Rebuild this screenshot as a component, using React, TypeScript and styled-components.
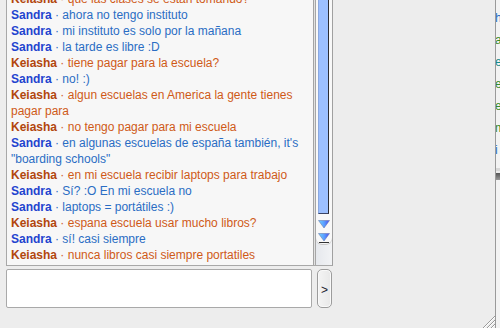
import styled, { createGlobalStyle } from "styled-components"

const GlobalStyle = createGlobalStyle`
  html, body {
    margin: 0;
    padding: 0;
    background: #ededed;
    overflow: hidden;
  }
  body {
    font-family: "Liberation Sans", Arial, Helvetica, sans-serif;
  }
`;

type Speaker = "Sandra" | "Keiasha";

const messages: { who: Speaker; text: string }[] = [
  { who: "Keiasha", text: "que las clases se están tomando?" },
  { who: "Sandra", text: "ahora no tengo instituto" },
  { who: "Sandra", text: "mi instituto es solo por la mañana" },
  { who: "Sandra", text: "la tarde es libre :D" },
  { who: "Keiasha", text: "tiene pagar para la escuela?" },
  { who: "Sandra", text: "no! :)" },
  { who: "Keiasha", text: "algun escuelas en America la gente tienes pagar para" },
  { who: "Keiasha", text: "no tengo pagar para mi escuela" },
  { who: "Sandra", text: "en algunas escuelas de españa también, it's \"boarding schools\"" },
  { who: "Keiasha", text: "en mi escuela recibir laptops para trabajo" },
  { who: "Sandra", text: "Sí? :O En mi escuela no" },
  { who: "Sandra", text: "laptops = portátiles :)" },
  { who: "Keiasha", text: "espana escuela usar mucho libros?" },
  { who: "Sandra", text: "sí! casi siempre" },
  { who: "Keiasha", text: "nunca libros casi siempre portatiles" },
];

const colors = {
  Sandra: { name: "#1f44cf", text: "#2a6dc4" },
  Keiasha: { name: "#b2460d", text: "#cf5a17" },
};

const Screen = styled.div`
  display: flex;
  width: 500px;
  height: 328px;
  overflow: hidden;
`;

const Window = styled.div`
  position: relative;
  box-sizing: border-box;
  width: 496px;
  height: 328px;
  border-right: 1px solid #9a9a9a;
  padding-left: 6px;
  display: flex;
  flex-direction: column;
`;

const ChatPanel = styled.div`
  box-sizing: border-box;
  width: 327px;
  height: 266px;
  display: flex;
  border-left: 1px solid #a8a8a8;
  border-right: 1px solid #a0a0a0;
  border-bottom: 1px solid #a8a8a8;
`;

const Transcript = styled.div`
  box-sizing: border-box;
  width: 307px;
  background: #f7f7f7;
  border-right: 1px solid #a4a4a4;
  padding: 0 4px;
  overflow: hidden;
`;

const Lines = styled.div`
  margin-top: -9px;
  font-size: 12px;
  line-height: 16px;
`;

const Line = styled.div<{ $who: Speaker }>`
  color: ${(p) => colors[p.$who].text};
`;

const Name = styled.b<{ $who: Speaker }>`
  color: ${(p) => colors[p.$who].name};
`;

const Scrollbar = styled.div`
  width: 18px;
  display: flex;
  flex-direction: column;
  background: linear-gradient(to right, #e4e7ec, #f2f3f5);
  box-shadow: inset 1px 0 0 #e2e2e2, inset 2px 0 0 #a6a6a6;
`;

const Track = styled.div`
  box-sizing: border-box;
  height: 245px;
  margin-left: 2px;
  padding-left: 2px;
  background: #f8f8f8;
  border-radius: 0 0 6px 6px;
  box-shadow: inset 0 -1px 0 #c8c8c8;
  display: flex;
  flex-direction: column;
`;

const Thumb = styled.div`
  box-sizing: border-box;
  width: 11px;
  height: 214px;
  background: #9dc0ff;
  border-right: 1px solid #2c2c34;
  border-bottom: 1px solid #3c4666;
  border-left: 1px solid #8aa8e0;
  display: flex;
  flex-direction: column;
  justify-content: center;
  align-items: center;
  gap: 2px;
  padding-bottom: 2px;
  padding-top: 0;
  & > span {
    display: block;
    width: 6px;
    height: 1px;
    background: #d6e4ff;
  }
`;

const Grip = styled.div`
  display: flex;
  flex-direction: column;
  gap: 2px;
  margin-top: -72px;
`;

const ArrowButton = styled.div`
  height: 13px;
  display: flex;
  align-items: center;
  justify-content: flex-start;
  padding-left: 0;
`;

const InputRow = styled.div`
  display: flex;
  margin-top: 3px;
  gap: 5px;
`;

const TextBox = styled.div`
  box-sizing: border-box;
  width: 306px;
  height: 39px;
  background: #ffffff;
  border: 1px solid #a9a9a9;
  border-radius: 2px;
`;

const SendButton = styled.div`
  box-sizing: border-box;
  width: 15px;
  height: 39px;
  border: 1px solid #9c9c9c;
  border-radius: 5px;
  background: linear-gradient(to right, #f4f4f4, #e8e8e8);
  box-shadow: inset 0 0 0 1px #f9f9f9;
  display: flex;
  align-items: center;
  justify-content: center;
  font-size: 12px;
  color: #1d2430;
  padding-top: 3px;
`;

const ResizeGrip = styled.svg`
  position: absolute;
  right: 0;
  bottom: 0;
`;

const OtherWindow = styled.div`
  width: 4px;
  height: 328px;
  background: #f3f3f3;
  overflow: hidden;
  display: flex;
  flex-direction: column;
`;

const PeekLines = styled.div`
  padding-top: 7px;
  font-size: 12px;
  line-height: 22px;
  white-space: nowrap;
`;

const PeekLine = styled.div<{ $color: string }>`
  color: ${(p) => p.$color};
  margin-left: -1px;
`;

const PeekBar = styled.div`
  margin-top: 7px;
  height: 12px;
  background: linear-gradient(#d8d8d8 0 3px, #ededed 3px 5px, #555 5px, #999 12px);
`;

const peek = [
  { ch: "h", color: "#2a6dc4" },
  { ch: "a", color: "#3a8a2a" },
  { ch: "e", color: "#1a8a8a" },
  { ch: "e", color: "#3a8a2a" },
  { ch: "e", color: "#3a8a2a" },
  { ch: "m", color: "#3a8a2a" },
  { ch: "i", color: "#2a6dc4" },
];

function DownArrow({ bar }: { bar?: boolean }) {
  return (
    <svg width="12" height="10" viewBox="0 0 12 10">
      <defs>
        <linearGradient id="arrowGrad" x1="0" x2="1" y1="0" y2="0">
          <stop offset="0" stopColor="#6fd0ff" />
          <stop offset="0.5" stopColor="#5aa0ff" />
          <stop offset="1" stopColor="#4a4cf0" />
        </linearGradient>
      </defs>
      <path d="M0.5 0.5 H11.5 L6 8 Z" fill="url(#arrowGrad)" stroke="#5a6aa0" strokeWidth="0.5" />
      {bar && <path d="M1 9.5 H11" stroke="#333" strokeWidth="1" />}
    </svg>
  );
}

export default function App() {
  return (
    <Screen>
      <GlobalStyle />
      <Window>
        <ChatPanel>
          <Transcript>
            <Lines>
              {messages.map((m, i) => (
                <Line key={i} $who={m.who}>
                  <Name $who={m.who}>{m.who}</Name> · {m.text}
                </Line>
              ))}
            </Lines>
          </Transcript>
          <Scrollbar>
            <Track>
              <Thumb>
                <Grip>
                  <span />
                  <span />
                  <span />
                </Grip>
              </Thumb>
              <ArrowButton style={{ marginTop: 4 }}>
                <DownArrow />
              </ArrowButton>
              <ArrowButton>
                <DownArrow bar />
              </ArrowButton>
            </Track>
          </Scrollbar>
        </ChatPanel>
        <InputRow>
          <TextBox />
          <SendButton>&gt;</SendButton>
        </InputRow>
        <ResizeGrip width="15" height="15" viewBox="0 0 15 15">
          <path d="M3 15 L15 3 M7 15 L15 7 M11 15 L15 11" stroke="#9a9a9a" strokeWidth="1" />
          <path d="M4 15 L15 4 M8 15 L15 8 M12 15 L15 12" stroke="#ffffff" strokeWidth="1" />
        </ResizeGrip>
      </Window>
      <OtherWindow>
        <PeekLines>
          {peek.map((p, i) => (
            <PeekLine key={i} $color={p.color}>{p.ch}</PeekLine>
          ))}
        </PeekLines>
        <PeekBar />
      </OtherWindow>
    </Screen>
  );
}
